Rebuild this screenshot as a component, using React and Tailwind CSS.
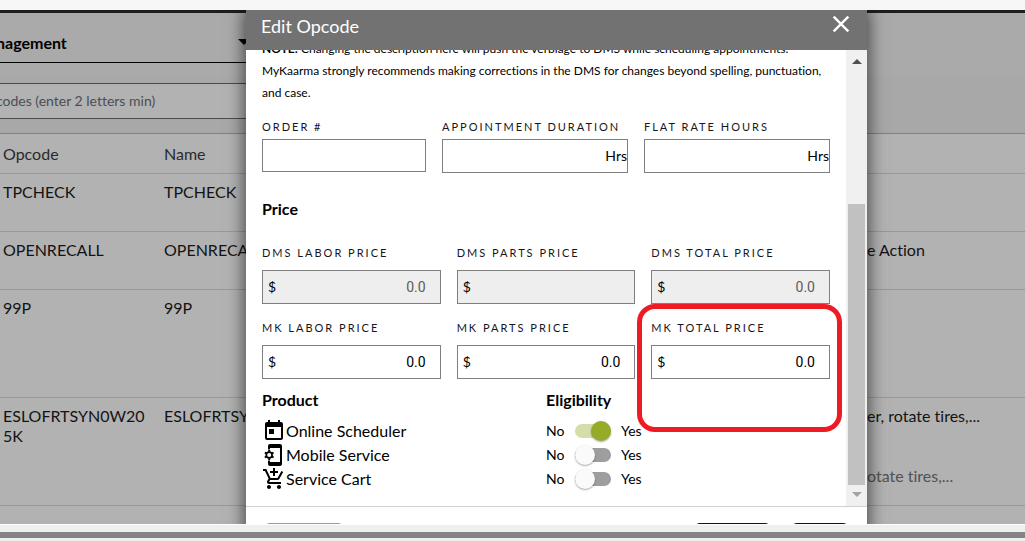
import React, { useState } from 'react'
import { MdToday, MdAddShoppingCart, MdClose } from 'react-icons/md'


const rows = [
    { opcode: 'TPCHECK', name: 'TPCHECK', height: 'h-[58px]' },
    { opcode: 'OPENRECALL', name: 'OPENRECALL', desc: 'e Action', height: 'h-[58px]' },
    { opcode: '99P', name: '99P', height: 'h-[108px]' },
    { opcode: 'ESLOFRTSYN0W205K', name: 'ESLOFRTSYN0W205K', desc: 'er, rotate tires,...', note: 'otate tires,...', height: 'h-[108px]' },
]

// phone with a gear over its left side
const MobileServiceIcon = () => (
    <svg width="24" height="24" viewBox="0 0 24 24" fill="currentColor">
        <path d="M8 1h10c1.1 0 2 .9 2 2v18c0 1.1-.9 2-2 2H8c-1.1 0-2-.9-2-2v-3.5h2V19h10V5H8v1.500H6V3c0-1.100.9-2 2-2z" />
        <g fill="none" stroke="currentColor">
            <circle cx="7.200" cy="12" r="2.900" strokeWidth="1.700" />
            <path strokeWidth="2" d="M7.200 8.700V7M7.200 15.300V17M10.050 10.350l1.500-.85M10.050 13.650l1.500.85M4.350 10.350l-1.500-.85M4.350 13.650l-1.500.85" />
        </g>
    </svg>
)

const Background = () => {
    return (
        <div className="flex h-full flex-col border-t-[3px] border-[#2c2c2e] bg-[#f1f1f1]">
            <div className="h-[63px] shrink-0 bg-[#f4f4f4]">
                <div className="relative w-[254px]">
                    <select
                        aria-label="Page"
                        className="h-[50px] w-full appearance-none border-b border-black bg-transparent pt-3.5 pb-1 -indent-1 text-base font-bold text-black"
                    >
                        <option>nagement</option>
                    </select>
                    <span className="pointer-events-none absolute top-[26px] right-1 border-x-[6px] border-t-[6px] border-x-transparent border-t-black" />
                </div>
            </div>
            <div className="h-[57px] shrink-0 pt-[7px]">
                <input
                    type="text"
                    aria-label="Search opcodes"
                    placeholder="codes (enter 2 letters min)"
                    className="h-9 w-3/5 border-y border-[#6b6b6b] bg-white pb-0.5 -indent-1 text-sm placeholder:text-[#6c7278]"
                />
            </div>
            <table className="w-full table-fixed border-collapse bg-white text-base leading-5 text-[#1c1c22]">
                <colgroup>
                    <col className="w-[161px]" />
                    <col className="w-[703px]" />
                    <col />
                </colgroup>
                <thead>
                    <tr className="h-10 border-t border-[#b8b8b8] text-left text-[#3c3c44]">
                        <th className="pl-[3px] font-normal">Opcode</th>
                        <th className="pl-[3px] font-normal">Name</th>
                        <th></th>
                    </tr>
                </thead>
                <tbody>
                    {rows.map((row) => (
                        <tr key={row.opcode} className={`${row.height} border-t border-[#dcdcdc] align-top`}>
                            <td className="pt-2 pr-3 pl-[3px] break-all">{row.opcode}</td>
                            <td className="pt-2 pl-[3px]">{row.name}</td>
                            <td className="pt-2 pl-[3px]">
                                {row.desc}
                                {row.note && <p className="mt-10 text-[#75757c]">{row.note}</p>}
                            </td>
                        </tr>
                    ))}
                    <tr className="h-10 border-t border-[#dcdcdc]">
                        <td colSpan={3}></td>
                    </tr>
                </tbody>
            </table>
        </div>
    )
}

const FieldLabel = ({ id, children }) => (
    <label htmlFor={id} className="block text-[11px] leading-5 tracking-[2px] whitespace-nowrap text-[#16161c]">
        {children}
    </label>
)

const HoursField = ({ id, label }) => (
    <div>
        <FieldLabel id={id}>{label}</FieldLabel>
        <div className="mt-0.5 flex h-[34px] items-center border border-[#7f7f7f]">
            <input id={id} type="text" className="h-full min-w-0 flex-1 text-right text-sm outline-none" />
            <span className="text-sm">Hrs</span>
        </div>
    </div>
)

const PriceField = ({ id, label, value, disabled, marked }) => {
    const [price, setPrice] = useState(value)

    return (
        <div className="relative">
            <FieldLabel id={id}>{label}</FieldLabel>
            <div className={`mt-[7px] flex h-[34px] items-center border border-[#7f7f7f] pr-3.5 pl-[5px] ${disabled ? 'bg-[#eeeeee]' : 'bg-white'}`}>
                <span className="text-sm">$</span>
                <input
                    id={id}
                    type="text"
                    value={price}
                    disabled={disabled}
                    onChange={(e) => setPrice(e.target.value)}
                    className="h-full min-w-0 flex-1 bg-transparent text-right font-[Roboto,sans-serif] text-sm outline-none disabled:text-[#5c5c5c]"
                />
            </div>
            {marked && (
                <div className="pointer-events-none absolute -top-[14px] -right-3 -bottom-[53px] -left-[14px] z-10 rounded-[18px] border-[5px] border-[#ed1c24]" />
            )}
        </div>
    )
}

const Eligibility = ({ name, initial }) => {
    const [on, setOn] = useState(initial)

    return (
        <label className="flex h-6 items-center text-sm">
            <span className="w-[29px]">No</span>
            <input
                type="checkbox"
                role="switch"
                aria-label={name}
                checked={on}
                onChange={() => setOn(!on)}
                className="relative mr-2.5 h-3.5 w-9 appearance-none rounded-full bg-[#9e9e9e] before:absolute before:-top-[3px] before:left-0 before:size-5 before:rounded-full before:bg-[#fafafa] before:shadow-[0_1px_2px_rgba(0,0,0,0.35)] checked:bg-[#d5deab] checked:before:translate-x-4 checked:before:bg-[#97ab28]"
            />
            <span>Yes</span>
        </label>
    )
}

const EditOpcode = () => {
    return (
        <div role="dialog" aria-label="Edit Opcode" className="min-w-0 flex-1 self-start bg-white shadow-[0_0_16px_2px_rgba(0,0,0,0.6)]">
            <div className="flex h-10 items-start justify-between bg-[#727272] pr-3 pl-[15px] text-white">
                <h2 className="text-lg leading-8">Edit Opcode</h2>
                <button type="button" aria-label="Close">
                    <MdClose size={28} />
                </button>
            </div>

            <div className="flex overflow-hidden">
                <div className="min-w-0 flex-1 px-4 pb-[15px]">
                    <p className="-mt-3 text-xs leading-[22px]">
                        <b>NOTE:</b> Changing the description here will push the verbiage to DMS while scheduling appointments. MyKaarma strongly recommends making corrections in the DMS for changes beyond spelling, punctuation, and case.
                    </p>

                    <div className="mt-[13px] grid grid-cols-[164px_minmax(0,1fr)_minmax(0,1fr)] gap-4">
                        <div>
                            <FieldLabel id="order">ORDER #</FieldLabel>
                            <input id="order" type="text" className="mt-0.5 block h-[33px] w-full border border-[#7f7f7f] px-2 text-sm" />
                        </div>
                        <HoursField id="duration" label="APPOINTMENT DURATION" />
                        <HoursField id="flat-rate" label="FLAT RATE HOURS" />
                    </div>

                    <h3 className="mt-6 text-base font-bold">Price</h3>
                    <div className="mt-[22px] grid grid-cols-3 gap-x-4 gap-y-3.5">
                        <PriceField id="dms-labor" label="DMS LABOR PRICE" value="0.0" disabled />
                        <PriceField id="dms-parts" label="DMS PARTS PRICE" value="" disabled />
                        <PriceField id="dms-total" label="DMS TOTAL PRICE" value="0.0" disabled />
                        <PriceField id="mk-labor" label="MK LABOR PRICE" value="0.0" />
                        <PriceField id="mk-parts" label="MK PARTS PRICE" value="0.0" />
                        <PriceField id="mk-total" label="MK TOTAL PRICE" value="0.0" marked />
                    </div>

                    <div className="mt-[9px] grid grid-cols-2">
                        <div>
                            <h3 className="mb-[7px] text-base font-bold">Product</h3>
                            <div className="flex items-center"><MdToday size={24} />Online Scheduler</div>
                            <div className="flex items-center"><MobileServiceIcon />Mobile Service</div>
                            <div className="flex items-center"><MdAddShoppingCart size={24} />Service Cart</div>
                        </div>
                        <div>
                            <h3 className="mb-[7px] text-base font-bold">Eligibility</h3>
                            <Eligibility name="Online Scheduler" initial={true} />
                            <Eligibility name="Mobile Service" initial={false} />
                            <Eligibility name="Service Cart" initial={false} />
                        </div>
                    </div>
                </div>

                {/* scrollbar */}
                <div className="flex w-[21px] flex-col items-center bg-[#f0f0f0]">
                    <span className="mt-[9px] border-x-[5px] border-b-[5px] border-x-transparent border-b-[#505050]" />
                    <span className="mt-[140px] w-[17px] flex-1 bg-[#c1c1c1]" />
                    <span className="mt-[7px] mb-[9px] border-x-[5px] border-t-[5px] border-x-transparent border-t-[#a3a3a3]" />
                </div>
            </div>

            <div className="flex gap-5 border-t border-[#d0d0d0] px-[18px] pt-4">
                <button type="button" aria-label="Cancel" className="h-9 w-20 rounded-md bg-[#9a9a9a]" />
                <button type="button" aria-label="Save and close" className="ml-auto h-9 w-[77px] rounded-md bg-[#111111]" />
                <button type="button" aria-label="Save" className="h-9 w-[58px] rounded-md bg-[#111111]" />
            </div>
        </div>
    )
}

const App = () => {
    return (
        <div className="flex h-screen flex-col overflow-hidden bg-[#f7f7f7] pt-2.5 font-[Lato,sans-serif] text-black [font-variant-ligatures:none]">
            <main className="relative min-h-0 flex-1 overflow-hidden">
                <Background />
                <div className="absolute inset-0 flex bg-black/30 pr-[158px] pl-[246px]">
                    <EditOpcode />
                </div>
            </main>
            <div className="border-t border-white bg-[#efefef] pt-[7px] pb-[3px]">
                <div className="h-1.5 bg-[#848484]" />
            </div>
        </div>
    )
}

export default App
